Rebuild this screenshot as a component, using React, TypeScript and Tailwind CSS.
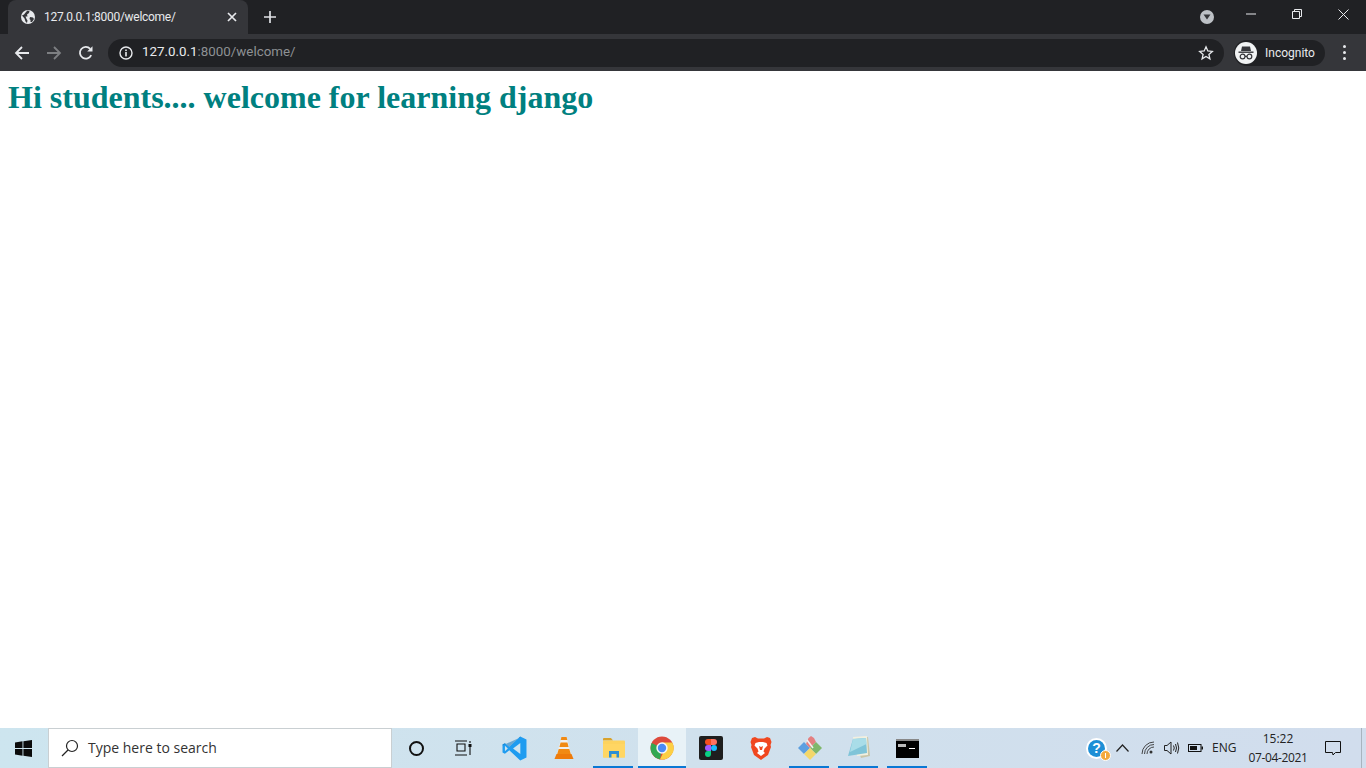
import React from "react";

const Globe = () => (
  <svg width="14" height="14" viewBox="0 0 14 14">
    <circle cx="7" cy="7" r="7" fill="#e8eaed" />
    <path d="M1 5.5 L3 4.5 L5 2 L6.5 0.6 L8.5 1 L8 3 L6 4.5 L6.5 6.5 L4.5 6.5 L5.5 9 L6.5 10.5 L6 13 L4.5 11.5 L3.5 8.5 Z" fill="#35363a" />
    <path d="M9 7 L12 7.5 L13 9 L11 12 L9.5 12 L9.5 10 L8.5 9 Z" fill="#35363a" />
  </svg>
);

const Chip = ({ children, bar, active, w = "w-[49px]" }: { children: React.ReactNode; bar?: boolean; active?: boolean; w?: string }) => (
  <div className={`relative h-[40px] flex items-center justify-center ${w} ${active ? "bg-[#e8f2f7]" : ""}`}>
    {children}
    {bar && <div className={`absolute bottom-0 h-[2px] bg-[#0a78d4] ${active ? "left-0 right-0" : "left-[4px] right-[5px]"}`} />}
  </div>
);

export default function App() {
  return (
    <div className="h-[768px] w-[1366px] flex flex-col overflow-hidden bg-white font-['Liberation_Sans',sans-serif]">
      {/* tab strip */}
      <div className="h-[34px] bg-[#202124] flex items-end shrink-0 relative">
        <div className="ml-[8px] w-[240px] h-[34px] bg-[#35363a] rounded-t-[8px] flex items-center pl-[13px] pr-[11px]">
          <Globe />
          <span className="ml-[9px] text-[12px] text-[#e8eaed] font-['Roboto',sans-serif] tracking-[-0.28px] flex-1 leading-none">127.0.0.1:8000/welcome/</span>
          <svg width="10" height="10" viewBox="0 0 10 10" stroke="#e8eaed" strokeWidth="1.7"><path d="M1 1 L9 9 M9 1 L1 9" /></svg>
        </div>
        <div className="ml-[16px] mb-[11px] w-[12px] h-[12px] relative">
          <svg width="12" height="12" viewBox="0 0 12 12" stroke="#dfe1e5" strokeWidth="1.7"><path d="M6 0 V12 M0 6 H12" /></svg>
        </div>
        <div className="flex-1" />
        <div className="mb-[10px] mr-[14px] w-[14px] h-[14px] rounded-full bg-[#bdc1c6] flex items-center justify-center">
          <svg width="8" height="6" viewBox="0 0 8 6"><path d="M0.5 0.5 H7.5 L4 5.5 Z" fill="#35363a" /></svg>
        </div>
        <div className="w-[46px] h-[34px] flex items-center justify-center pb-[6px]">
          <svg width="10" height="2" viewBox="0 0 10 2"><path d="M0 1 H10" stroke="#e8eaed" strokeWidth="1" /></svg>
        </div>
        <div className="w-[46px] h-[34px] flex items-center justify-center pb-[6px]">
          <svg width="10" height="10" viewBox="0 0 10 10" fill="none" stroke="#e8eaed" strokeWidth="1"><path d="M0.5 2.5 H7.5 V9.5 H0.5 Z M2.5 2.5 V0.5 H9.5 V7.5 H7.5" /></svg>
        </div>
        <div className="w-[46px] h-[34px] flex items-center justify-center pb-[6px]">
          <svg width="11" height="11" viewBox="0 0 11 11" stroke="#e8eaed" strokeWidth="1"><path d="M0.5 0.5 L10.5 10.5 M10.5 0.5 L0.5 10.5" /></svg>
        </div>
      </div>

      {/* toolbar */}
      <div className="h-[37px] bg-[#35363a] flex items-center shrink-0 pl-[14px]">
        <svg width="16" height="16" viewBox="0 0 16 16" fill="none" stroke="#e8eaed" strokeWidth="1.8"><path d="M15 8 H2 M8 2 L2 8 L8 14" /></svg>
        <svg className="ml-[16px]" width="16" height="16" viewBox="0 0 16 16" fill="none" stroke="#7d7f82" strokeWidth="1.8"><path d="M1 8 H14 M8 2 L14 8 L8 14" /></svg>
        <svg className="ml-[16px]" width="16" height="16" viewBox="0 0 16 16" fill="none" stroke="#e8eaed" strokeWidth="1.8">
          <path d="M13.2 10.2 A5.9 5.9 0 1 1 12.2 3.8" />
          <path d="M14.5 1.2 V6.6 H9.2 Z" fill="#e8eaed" stroke="none" />
        </svg>
        <div className="ml-[14px] w-[1116px] h-[28px] rounded-full bg-[#202124] flex items-center pl-[11px] pr-[10px]">
          <svg width="14" height="14" viewBox="0 0 14 14" fill="none">
            <circle cx="7" cy="7" r="6" stroke="#e8eaed" strokeWidth="1.4" />
            <rect x="6.2" y="6" width="1.6" height="4.4" fill="#e8eaed" />
            <rect x="6.2" y="3.5" width="1.6" height="1.6" fill="#e8eaed" />
          </svg>
          <span className="ml-[9px] text-[13.35px] leading-none font-['Roboto',sans-serif] text-[#e8eaed] flex-1 pb-[1px]">
            127.0.0.1<span className="text-[#8e9194]">:8000/welcome/</span>
          </span>
          <svg width="16" height="16" viewBox="0 0 16 16" fill="none" stroke="#e8eaed" strokeWidth="1.3">
            <path d="M8 1.8 L9.8 6 L14.3 6.4 L10.9 9.4 L11.9 13.9 L8 11.5 L4.1 13.9 L5.1 9.4 L1.7 6.4 L6.2 6 Z" />
          </svg>
        </div>
        <div className="ml-[10px] w-[91px] h-[26px] rounded-full bg-[#202124] flex items-center pl-[1px]">
          <div className="w-[22px] h-[22px] rounded-full bg-[#f1f3f4] flex items-center justify-center">
            <svg width="16" height="14" viewBox="0 0 16 14" fill="none">
              <path d="M4 0.5 H12 L13 5 H3 Z" fill="#35363a" />
              <rect x="0.5" y="5.5" width="15" height="1.4" fill="#35363a" />
              <circle cx="4.6" cy="10.5" r="2.4" stroke="#35363a" strokeWidth="1.2" />
              <circle cx="11.4" cy="10.5" r="2.4" stroke="#35363a" strokeWidth="1.2" />
              <path d="M7 10.3 H9" stroke="#35363a" strokeWidth="1.2" />
            </svg>
          </div>
          <span className="ml-[8px] text-[12px] leading-none font-['Roboto',sans-serif] text-[#e8eaed]">Incognito</span>
        </div>
        <div className="ml-[18px] flex flex-col gap-[3px]">
          <div className="w-[3px] h-[3px] rounded-full bg-[#e8eaed]" />
          <div className="w-[3px] h-[3px] rounded-full bg-[#e8eaed]" />
          <div className="w-[3px] h-[3px] rounded-full bg-[#e8eaed]" />
        </div>
      </div>

      {/* page */}
      <div className="flex-1 bg-white px-[8px] pt-[8px]">
        <h1 className="text-[32px] leading-[37px] font-bold text-[#008080] font-['Liberation_Serif',serif]">Hi students.... welcome for learning django</h1>
      </div>

      {/* taskbar */}
      <div className="h-[40px] shrink-0 flex items-center bg-gradient-to-r from-[#cde5ef] via-[#d0e1ed] to-[#d1dded]">
        <div className="w-[48px] h-[40px] flex items-center justify-center pr-[1px]">
          <svg width="17" height="17" viewBox="0 0 17 17" fill="#0b0b0b">
            <path d="M0 2.4 L7.5 1.3 V8 H0 Z M8.4 1.2 L17 0 V8 H8.4 Z M0 9 H7.5 V15.7 L0 14.6 Z M8.4 9 H17 V17 L8.4 15.8 Z" />
          </svg>
        </div>
        <div className="w-[344px] h-[40px] bg-white border border-[#c9cfd2] flex items-center pl-[12px]">
          <svg width="18" height="18" viewBox="0 0 18 18" fill="none" stroke="#222" strokeWidth="1.2">
            <circle cx="11" cy="7" r="5.5" />
            <path d="M7 11 L1 17" />
          </svg>
          <span className="ml-[9px] text-[14px] leading-none text-[#333] font-['Open_Sans',sans-serif]">Type here to search</span>
        </div>
        <Chip>
          <div className="w-[15px] h-[15px] rounded-full border-[2.5px] border-[#111]" />
        </Chip>
        <Chip>
          <svg className="mr-[3px]" width="18" height="16" viewBox="0 0 18 16" fill="none" stroke="#111" strokeWidth="1.1">
            <path d="M0 1 H12 M0 15 H12 M2 4 H10 V11 H2 Z M15 1 V3 M15 7 V15" />
            <rect x="13.5" y="4" width="3" height="3" fill="#111" stroke="none" />
          </svg>
        </Chip>
        <Chip>
          <svg width="25" height="25" viewBox="0 0 24 24">
            <path d="M17.5 0.5 L23.5 3.3 V20.7 L17.5 23.5 L7 13.7 L2.8 17 L0.5 15.8 V8.2 L2.8 7 L7 10.3 Z" fill="#1f9cf0" />
            <path d="M17.6 6.8 L10.6 12 L17.6 17.2 Z" fill="#cfe4ef" />
            <path d="M2.8 9.4 V14.6 L5.6 12 Z" fill="#cfe4ef" />
            <path d="M17.5 0.5 L7 10.3 L2.8 7 L0.5 8.2 L0.5 9 L17.5 1.5 Z" fill="#0a70b8" opacity="0.5" />
          </svg>
        </Chip>
        <Chip w="w-[50px]">
          <svg width="20" height="24" viewBox="0 0 20 24">
            <path d="M7.5 1 H12.5 L17 18 H3 Z" fill="#f0f0ee" />
            <path d="M6.6 6.5 H13.4 L14.6 11 H5.4 Z M4.7 13 H15.3 L16.8 18 H3.2 Z" fill="#f18a13" />
            <path d="M7.4 1 H12.6 L13.3 4 H6.7 Z" fill="#f18a13" />
            <path d="M2.5 18 H17.5 L19.5 23 H0.5 Z" fill="#ee7b0b" />
          </svg>
        </Chip>
        <Chip bar>
          <svg width="22" height="20" viewBox="0 0 22 20">
            <path d="M0 1 A1 1 0 0 1 1 0 H8 L10 2.5 H0 Z" fill="#d9a22b" />
            <rect x="0" y="2.5" width="22" height="17" rx="1" fill="#fdd35e" />
            <path d="M0 6 H22 V19.5 H0 Z" fill="#ffd663" />
            <path d="M6 19.5 V13 H16 V19.5 H13.5 V16 H8.5 V19.5 Z" fill="#2d8fd5" />
          </svg>
        </Chip>
        <Chip w="w-[48px]" bar active>
          <svg className="mr-[1px]" width="24" height="24" viewBox="0 0 24 24">
            <circle cx="12" cy="12" r="11.5" fill="#dd4a3c" />
            <path d="M12 12 L1.7 7 A11.5 11.5 0 0 0 10 23.3 Z" fill="#33a853" />
            <path d="M12 6.5 H22.3 A11.5 11.5 0 0 1 10 23.3 L15.5 12 Z" fill="#fccf44" />
            <circle cx="12" cy="12" r="5.7" fill="#f4f7fa" />
            <circle cx="12" cy="12" r="4.2" fill="#4a8af4" />
          </svg>
        </Chip>
        <Chip w="w-[50px]">
          <div className="w-[24px] h-[24px] rounded-[2px] bg-[#1e1e1e] flex items-center justify-center">
            <svg width="12" height="18" viewBox="0 0 12 18">
              <path d="M3 0 H6 V6 H3 A3 3 0 0 1 3 0 Z" fill="#f24e1e" />
              <path d="M6 0 H9 A3 3 0 0 1 9 6 H6 Z" fill="#ff7262" />
              <path d="M3 6 H6 V12 H3 A3 3 0 0 1 3 6 Z" fill="#a259ff" />
              <circle cx="9" cy="9" r="3" fill="#1abcfe" />
              <path d="M3 12 H6 V15 A3 3 0 1 1 3 12 Z" fill="#0acf83" />
            </svg>
          </div>
        </Chip>
        <Chip>
          <svg width="22" height="24" viewBox="0 0 22 24">
            <path d="M5 1 L8 2.5 H14 L17 1 L20 2 L21.5 6 L20.5 9 L21 11 L18 19 L11 24 L4 19 L1 11 L1.5 9 L0.5 6 L2 2 Z" fill="#f0471f" />
            <path d="M5.5 7 L9 6 H13 L16.5 7 L17.5 9.5 L14.5 12.5 L13.5 15.5 L15 17 L11 20 L7 17 L8.5 15.5 L7.5 12.5 L4.5 9.5 Z" fill="#fff" />
            <path d="M9 10 L11 11 L13 10 L12 14 H10 Z" fill="#f0471f" />
          </svg>
        </Chip>
        <Chip bar>
          <svg width="26" height="26" viewBox="0 0 26 26">
            <path d="M13 13 L7 7 L1 13 L7 19 Z" fill="#5c9fe0" />
            <path d="M13 13 L9 9 L11.5 3 L14 1 L17 3 L19 7 Z" fill="#e47f80" />
            <path d="M13 13 L19 7 L25 13 L19 19 Z" fill="#7fb76b" />
            <path d="M13 13 L19 19 L13 25 L7 19 Z" fill="#f3d76a" />
            <path d="M10 5 L16 13" stroke="#f1f1f1" strokeWidth="1.5" />
          </svg>
        </Chip>
        <Chip bar>
          <svg width="24" height="24" viewBox="0 0 24 24">
            <path d="M7 2 L21 1 L23 20 L14 22 Z" fill="#c9c5a8" />
            <path d="M6 1 L20 0 L21 19 L10 20 Z" fill="#f2f0e0" />
            <path d="M6 3 L19 2 L20 17 L1 20 Z" fill="#7fc4d8" />
            <path d="M6 3 L19 2 L19.5 8 L3 16 Z" fill="#a9dde8" />
          </svg>
        </Chip>
        <Chip bar>
          <div className="w-[23px] h-[19px] bg-black border-t-[2px] border-[#888] pl-[2px] pt-[3px] relative">
            <div className="w-[8px] h-[3px] bg-[#bbb]" />
            <div className="absolute right-[4px] top-[7px] w-[6px] h-[1px] bg-white" />
          </div>
        </Chip>
        <div className="flex-1" />
        <div className="relative w-[21px] h-[21px] rounded-full bg-white flex items-center justify-center">
          <div className="w-[17px] h-[17px] rounded-full bg-[#1d8fd6] flex items-center justify-center text-white font-bold text-[14px] leading-none font-['Liberation_Sans',sans-serif]">?</div>
          <div className="absolute right-[-4px] bottom-[-2px] w-[11px] h-[11px] rounded-full bg-[#f4a93b] border border-white flex items-center justify-center">
            <div className="w-[1px] h-[5px] bg-white" />
          </div>
        </div>
        <svg className="ml-[9px]" width="13" height="8" viewBox="0 0 13 8" fill="none" stroke="#222" strokeWidth="1.2"><path d="M0.5 7.5 L6.5 1 L12.5 7.5" /></svg>
        <svg className="ml-[12px]" width="14" height="14" viewBox="0 0 14 14" fill="none" stroke="#333" strokeWidth="0.9">
          <path d="M1 13 A12 12 0 0 1 13 1 M3.5 13 A9.5 9.5 0 0 1 13 3.5 M6 13 A7 7 0 0 1 13 6" />
          <circle cx="10" cy="11" r="1.5" fill="#333" stroke="none" />
        </svg>
        <svg className="ml-[9px]" width="16" height="14" viewBox="0 0 16 14" fill="none" stroke="#222" strokeWidth="1">
          <path d="M0.5 4.5 H3 L7 1 V13 L3 9.5 H0.5 Z" />
          <path d="M9.5 4.5 Q11 7 9.5 9.5 M11.5 3 Q13.5 7 11.5 11 M13.5 1.5 Q16 7 13.5 12.5" />
        </svg>
        <svg className="ml-[8px]" width="15" height="8" viewBox="0 0 15 8" fill="none">
          <rect x="0.5" y="0.5" width="12.5" height="7" stroke="#111" />
          <rect x="2" y="2" width="7" height="4" fill="#111" />
          <rect x="13.5" y="2.5" width="1.5" height="3" fill="#111" />
        </svg>
        <span className="ml-[9px] text-[12px] leading-none text-[#222] font-['Open_Sans',sans-serif] w-[24px] whitespace-nowrap">ENG</span>
        <div className="ml-[13px] w-[58px] flex flex-col items-center text-[12px] leading-[19px] text-[#222] font-['Open_Sans',sans-serif]">
          <span>15:22</span>
          <span className="whitespace-nowrap tracking-[-0.38px]">07-04-2021</span>
        </div>
        <svg className="ml-[18px]" width="16" height="15" viewBox="0 0 16 15" fill="none" stroke="#111" strokeWidth="1">
          <path d="M0.5 0.5 H15.5 V11.5 H10.5 L8 14 L7.5 11.5 H0.5 Z" />
        </svg>
        <div className="ml-[20px] w-[5px] h-[40px] border-l border-[#a8b4bf]" />
      </div>
    </div>
  );
}
